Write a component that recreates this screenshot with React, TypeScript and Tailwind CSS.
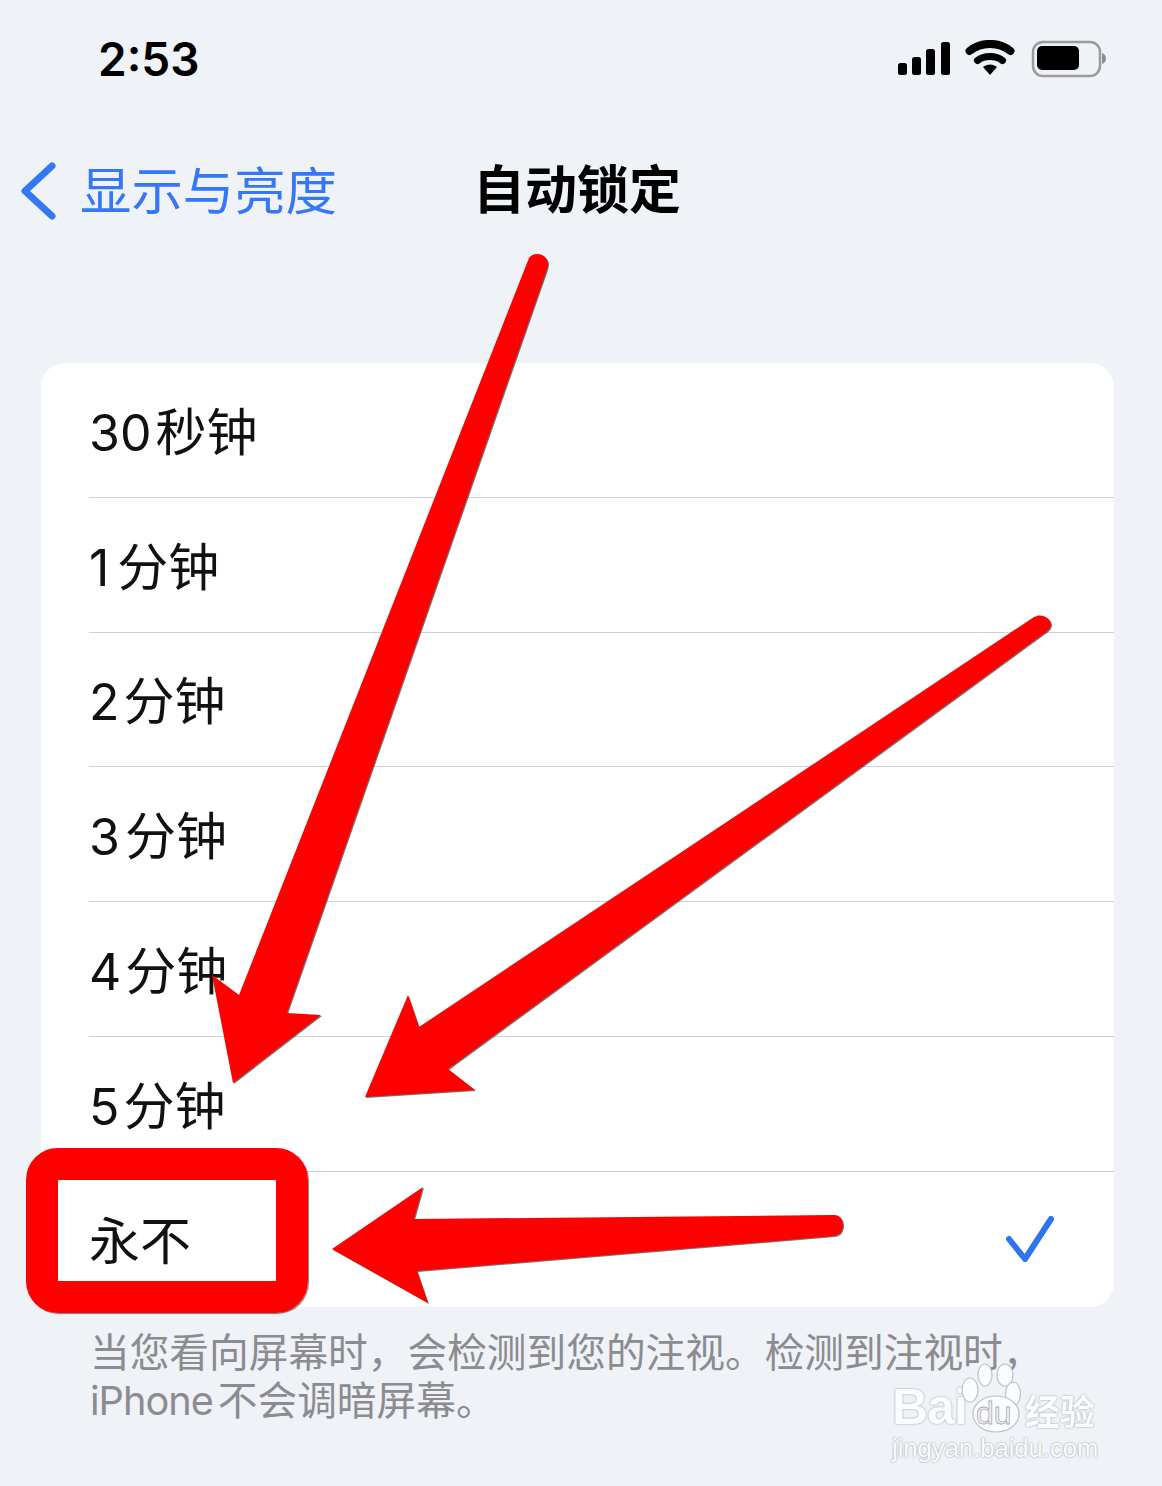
const rows = [
  { num: '30', unit: '秒钟', gap: 'ml-[4px]' },
  { num: '1', unit: '分钟', gap: 'ml-[8px]' },
  { num: '2', unit: '分钟', gap: 'ml-[4px]' },
  { num: '3', unit: '分钟', gap: 'ml-[5px]' },
  { num: '4', unit: '分钟', gap: 'ml-[4px]' },
  { num: '5', unit: '分钟', gap: 'ml-[4px]' },
  { num: '', unit: '永不', gap: '' },
]

const sans = "font-['Inter','Noto_Sans_CJK_SC',sans-serif]"

function StatusIcons() {
  return (
    <svg width="210" height="38" viewBox="898 40 210 38" className="block">
      {/* signal */}
      <rect x="899" y="63" width="9" height="12" rx="2.5" fill="#000" />
      <rect x="913" y="57" width="9" height="18" rx="2.5" fill="#000" />
      <rect x="927" y="49" width="9" height="26" rx="2.5" fill="#000" />
      <rect x="942" y="42" width="9" height="33" rx="2.5" fill="#000" />
      {/* wifi */}
      <path d="M970.500 51 C982 41.500 1000 41.500 1011.500 51" fill="none" stroke="#000" strokeWidth="8" strokeLinecap="round" />
      <path d="M978.500 60.500 C985 55 997 55 1003.500 60.500" fill="none" stroke="#000" strokeWidth="7" strokeLinecap="round" />
      <path d="M984 67 C988 63.500 994 63.500 998 67 L991 75 Z" fill="#000" />
      {/* battery */}
      <rect x="1034" y="42" width="67" height="34" rx="10" fill="none" stroke="#9b9b9d" strokeWidth="2.500" />
      <rect x="1038" y="46" width="42" height="24" rx="5" fill="#000" />
      <path d="M1103 53 C1106 54 1107 56 1107 58.500 C1107 61 1106 63 1103 64 Z" fill="#8e8e90" />
    </svg>
  )
}

function Annotations() {
  return (
    <svg viewBox="0 0 1162 1486" className="absolute inset-0 h-full w-full pointer-events-none">
      <g fill="#ff0000" className="[filter:drop-shadow(1px_1px_0.6px_rgba(0,0,0,0.55))]">
        <path d="M529 258 C533 252 546 252 548 263 C548 266 547 269 546 272 L287 1013 L321 1015 L233 1083 L212 975 L239 995 Z" />
        <path d="M1034 617 C1041 613 1050 617 1051 624 C1051 627 1049 630 1046 632 L448 1069 L475 1090 L365 1097 L408 995 L419 1027 Z" />
        <path d="M834 1215 C841 1215 843 1221 843 1225 C843 1231 840 1235 834 1236 L417 1271 L428 1303 L332 1249 L423 1187 L414 1219 Z" />
      </g>
    </svg>
  )
}

function Watermark() {
  return (
    <div className="absolute left-[892px] top-[1363px] flex flex-col pointer-events-none font-['Liberation_Sans',sans-serif] text-[#fbfcfd]">
      <div className="flex items-end h-[70px]">
        <span className="font-bold text-[50px] leading-[52px] tracking-[-1px] [text-shadow:0_0_2px_#8f9298]">Bai</span>
        <svg width="62" height="70" viewBox="958 1361 62 70" className="-ml-[7px]" fill="#fbfcfd" stroke="#bfc1c6" strokeWidth="1.2">
          <ellipse cx="983" cy="1373" rx="7" ry="11" />
          <ellipse cx="1003" cy="1373" rx="8" ry="11" />
          <ellipse cx="968" cy="1388" rx="8" ry="12" />
          <ellipse cx="1011" cy="1392" rx="7.500" ry="12" />
          <ellipse cx="994" cy="1412" rx="23" ry="18" />
          <text x="974" y="1422" fontSize="32" fill="#eef0f3" stroke="#a9acb2" strokeWidth="0.8">du</text>
        </svg>
        <span className="ml-[3px] pb-[1px] font-['Noto_Sans_CJK_SC',sans-serif] font-bold text-[35px] leading-[44px] [text-shadow:0_0_2px_#8f9298]">经验</span>
      </div>
      <span className="text-[25.600px] leading-[30px] [text-shadow:0_0_2px_#858890]">jingyan.baidu.com</span>
    </div>
  )
}

export default function App() {
  return (
    <div className={`relative w-[1162px] h-[1486px] overflow-hidden bg-[#eff2f7] ${sans}`}>
      {/* Status bar */}
      <div className="flex items-center justify-between h-[78px] pt-[40px] pl-[98px] pr-[55px]">
        <span className="font-semibold text-[46px] leading-[38px] text-black">2:53</span>
        <StatusIcons />
      </div>

      {/* Nav */}
      <div className="flex items-center h-[76px] mt-[75px] pl-[20px]">
        <svg width="36" height="58" viewBox="0 0 36 58" className="text-[#3478f6]">
          <path d="M32 4 L5 29 L32 54" fill="none" stroke="currentColor" strokeWidth="7" strokeLinecap="round" strokeLinejoin="round" />
        </svg>
        <span className="ml-[24px] text-[51.400px] leading-[60px] text-[#3478f6]">显示与亮度</span>
        <span className="ml-[136px] font-bold text-[52px] leading-[60px] text-black">自动锁定</span>
      </div>

      {/* Options */}
      <div className="ml-[41px] mr-[48px] mt-[134px] rounded-[24px] bg-white">
        {rows.map((row, i) => (
          <div key={row.unit + row.num} className="flex items-center h-[134.800px] pl-[48px]">
            <div className={`flex items-center justify-between h-full flex-1 pr-[60px] ${i < rows.length - 1 ? 'border-b border-[#cfd0d6]' : ''}`}>
              <span className="flex items-baseline pt-[6px] text-[50px] leading-[60px] text-[#111]">
                {row.num && <span>{row.num}</span>}
                <span className={`text-[51px] ${row.gap}`}>{row.unit}</span>
              </span>
              {row.unit === '永不' && (
                <svg width="48" height="46" viewBox="0 0 48 46" className="text-[#2f74ee]">
                  <path d="M3 23 L19 43 L45 3" fill="none" stroke="currentColor" strokeWidth="6" strokeLinecap="round" strokeLinejoin="round" />
                </svg>
              )}
            </div>
          </div>
        ))}
      </div>

      {/* Footnote */}
      <p className="ml-[90px] mt-[22px] w-[960px] text-[39.700px] leading-[48px] text-[#8b8b90]">
        当您看向屏幕时，会检测到您的注视。检测到注视时，
        <br />
        <span className="tracking-[-1px]">iPhone</span>
        <span className="ml-[5px]">不会调暗屏幕。</span>
      </p>

      <Annotations />
      {/* Red highlight around the last row */}
      <div className="absolute left-[26px] top-[1148px] w-[282px] h-[165px] border-[32px] border-[#ff0000] rounded-[32px] shadow-[1px_1px_1px_rgba(0,0,0,0.5)]" />
      <Watermark />
    </div>
  )
}
